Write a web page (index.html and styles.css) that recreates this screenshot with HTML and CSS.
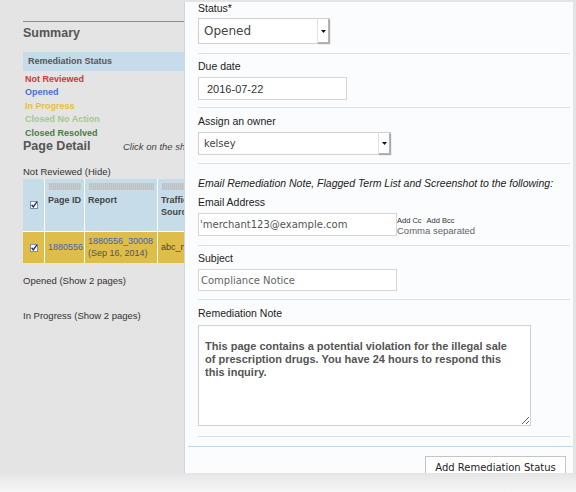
FILE: index.html
```html
<!DOCTYPE html>
<html>
<head>
<meta charset="utf-8">
<title>Remediation</title>
<link rel="stylesheet" href="styles.css">
</head>
<body>
<main class="page">
  <hr class="rule">
  <h2 class="title summary">Summary</h2>
  <div class="status-head">Remediation Status</div>
  <ul class="status-list">
    <li class="st-red">Not Reviewed</li>
    <li class="st-blue">Opened</li>
    <li class="st-yellow">In Progress</li>
    <li class="st-lgreen">Closed No Action</li>
    <li class="st-dgreen">Closed Resolved</li>
  </ul>
  <div class="detail-head">
    <h2 class="title detail-title">Page Detail</h2>
    <span class="hint">Click on the sha</span>
  </div>
  <p class="group g-first">Not Reviewed (Hide)</p>
  <div class="grid">
    <div class="hcell cbcell"><svg class="cb" width="8" height="8" viewBox="0 0 8 8"><rect x="0.5" y="0.5" width="7" height="7" fill="#fff" stroke="#7d8ea6"/><path d="M1.6 3.8 L3.3 5.9 L6.9 0.9" fill="none" stroke="#1d2f7a" stroke-width="1.4"/></svg></div>
    <div class="hcell"><span class="sortbar"></span><span class="hlabel">Page ID</span></div>
    <div class="hcell"><span class="sortbar"></span><span class="hlabel">Report</span></div>
    <div class="hcell"><span class="sortbar"></span><span class="hlabel">Traffic<br>Source</span></div>
    <div class="dcell cbcell"><svg class="cb" width="8" height="8" viewBox="0 0 8 8"><rect x="0.5" y="0.5" width="7" height="7" fill="#fff" stroke="#7d8ea6"/><path d="M1.6 3.8 L3.3 5.9 L6.9 0.9" fill="none" stroke="#1d2f7a" stroke-width="1.4"/></svg></div>
    <div class="dcell"><a class="link">1880556</a></div>
    <div class="dcell"><a class="link">1880556_30008</a><span class="date">(Sep 16, 2014)</span></div>
    <div class="dcell"><span class="src">abc_n</span></div>
  </div>
  <p class="group g-opened">Opened (Show 2 pages)</p>
  <p class="group g-progress">In Progress (Show 2 pages)</p>
</main>

<aside class="drawer">
  <div class="drawer-body">
    <div class="field f-status">
      <label class="label">Status*</label>
      <div class="select sel-status">
        <span class="sel-text big">Opened</span>
        <span class="sel-arrow"><svg width="5" height="3" viewBox="0 0 5 3"><path d="M0 0 H5 L2.5 3 Z" fill="#111"/></svg></span>
      </div>
    </div>
    <div class="field f-due">
      <label class="label">Due date</label>
      <input class="input in-date" type="text" value="2016-07-22">
    </div>
    <div class="field f-owner">
      <label class="label">Assign an owner</label>
      <div class="select sel-owner">
        <span class="sel-text">kelsey</span>
        <span class="sel-arrow"><svg width="5" height="3" viewBox="0 0 5 3"><path d="M0 0 H5 L2.5 3 Z" fill="#111"/></svg></span>
      </div>
    </div>
    <div class="field f-email">
      <p class="intro">Email Remediation Note, Flagged Term List and Screenshot to the following:</p>
      <label class="label l-email">Email Address</label>
      <div class="email-row">
        <input class="input in-email" type="text" value="'merchant123@example.com">
        <div class="email-side">
          <div class="cc"><span>Add Cc</span><span class="bcc">Add Bcc</span></div>
          <div class="comma">Comma separated</div>
        </div>
      </div>
    </div>
    <div class="field f-subject">
      <label class="label">Subject</label>
      <input class="input in-subject" type="text" value="Compliance Notice">
    </div>
    <div class="field f-note">
      <label class="label">Remediation Note</label>
      <textarea class="note">This page contains a potential violation for the illegal sale of prescription drugs. You have 24 hours to respond this this inquiry.</textarea>
    </div>
  </div>
  <div class="drawer-foot">
    <button class="btn" type="button">Add Remediation Status</button>
  </div>
</aside>
</body>
</html>
```
FILE: styles.css
```css
* { box-sizing: border-box; }
html, body { margin: 0; padding: 0; }
body {
  width: 576px;
  height: 492px;
  overflow: hidden;
  position: relative;
  background: linear-gradient(to bottom, #e4e4e4 0, #e4e4e4 473px, #e6e6e6 474px, #f6f6f6 492px);
  font-family: "Liberation Sans", Arial, sans-serif;
  color: #333;
}

/* ---------- left page ---------- */
.page { padding: 21px 0 0 23px; width: 185px; overflow: hidden; }
.rule { margin: 0; border: 0; border-top: 1px solid #8e8e8e; height: 0; }
.title { margin: 0; font-size: 12.5px; line-height: 15px; font-weight: bold; color: #555; }
.summary { margin-top: 3.5px; }
.status-head {
  margin-top: 11.5px;
  height: 19px;
  line-height: 19px;
  background: #c7dcea;
  color: #555;
  font-size: 9px;
  font-weight: bold;
  padding-left: 5px;
}
.status-list { margin: 1.5px 0 0; padding: 0 0 0 2px; list-style: none; }
.status-list li { font-size: 9px; line-height: 13.6px; font-weight: bold; }
.st-red { color: #c8393b; }
.st-blue { color: #4c6fd7; }
.st-yellow { color: #e6c03c; }
.st-lgreen { color: #a7c78b; }
.st-dgreen { color: #45803d; }

.detail-head { display: flex; align-items: baseline; }
.detail-title { width: 100px; line-height: 13px; flex: none; }
.hint { font-size: 9.5px; font-style: italic; color: #444; white-space: nowrap; }

.group { margin: 0; font-size: 9.5px; line-height: 12px; color: #333; white-space: nowrap; }
.g-first { margin-top: 13px; }
.g-opened { margin-top: 11.5px; }
.g-progress { margin-top: 23px; }

.grid {
  margin-top: 0.5px;
  display: grid;
  grid-template-columns: 21px 39px 72px 40px;
  grid-template-rows: 52.5px 31px;
  column-gap: 1px;
  row-gap: 1px;
  background: #fff;
  width: 175px;
}
.hcell { background: #c6dce9; display: flex; flex-direction: column; }
.dcell { background: #dfbd4b; display: flex; flex-direction: column; justify-content: center; padding-left: 3px; white-space: nowrap; }
.cbcell { align-items: center; justify-content: center; padding: 0 0 0 1px; }
.cb { display: block; }
.sortbar {
  display: block;
  height: 7px;
  margin: 4px 3px 0 4px;
  background: repeating-linear-gradient(90deg, #bcc0c3 0 1px, #c9cccf 1px 2px);
}
.hlabel { display: block; margin-top: 4.5px; padding-left: 3px; font-size: 9px; line-height: 12px; font-weight: bold; color: #444; white-space: nowrap; }
.link { color: #3d64b0; font-size: 9px; line-height: 11.7px; text-decoration: none; }
.date { font-size: 9px; line-height: 11.7px; color: #555; }
.src { font-size: 9px; line-height: 11.7px; color: #444; }

/* ---------- drawer ---------- */
.drawer {
  position: absolute;
  left: 184px;
  top: 2px;
  width: 389px;
  height: 471px;
  overflow: hidden;
  background: #fbfcfd;
  border-left: 1px solid #c7d7e6;
}
.drawer-body { margin: 0 3px 0 13px; }
.field { border-bottom: 1px solid #d8e0e9; }
.label { display: block; font-size: 10.5px; line-height: 12px; color: #222; }

.f-status { padding: 0 0 9px; }
.f-status .label { margin-bottom: 4px; }
.f-due { padding: 6px 0 7px; }
.f-due .label { margin-bottom: 5px; }
.f-owner { padding: 7px 0 8px; }
.f-owner .label { margin-bottom: 5px; }
.f-email { padding: 13px 0 9px; }
.f-email .label { margin-bottom: 5px; }
.f-subject { padding: 6px 0 8px; }
.f-subject .label { margin-bottom: 5px; }
.f-note { padding: 7px 0 10px; }
.f-note .label { margin-bottom: 6px; }

.intro { margin: 0; font-size: 10.5px; line-height: 12px; font-style: italic; color: #222; white-space: nowrap; }
.l-email { margin-top: 7px; }

.select {
  display: flex;
  align-items: stretch;
  background: #fff;
  border: 1px solid #d0d0d0;
}
.sel-status { width: 132px; height: 26px; }
.sel-owner { width: 193px; height: 23px; }
.sel-text { flex: 1; display: flex; align-items: center; padding-left: 5px; font-family: "DejaVu Sans", sans-serif; font-size: 10px; color: #444; }
.sel-text.big { font-size: 12px; }
.sel-arrow {
  width: 12px;
  flex: none;
  display: flex;
  align-items: center;
  justify-content: center;
  border-left: 1px solid #e2e2e2;
  box-shadow: inset -1px -1px 0 #b5b5b5, 1px 1px 1px #aaa;
}
.sel-arrow svg { display: block; }

.input {
  display: block;
  margin: 0;
  height: 23px;
  background: #fff;
  border: 1px solid #d6d6d6;
  outline: none;
  font-family: "DejaVu Sans", sans-serif;
  font-size: 10px;
  color: #555;
}
.in-date { width: 149px; padding: 0 0 0 8px; font-family: "Liberation Sans", Arial, sans-serif; font-size: 11px; color: #333; }
.in-email { width: 199px; padding: 0 0 0 1px; color: #555; flex: none; }
.in-subject { width: 199px; height: 22px; padding: 0 0 0 2px; color: #666; }

.email-row { display: flex; align-items: flex-start; }
.email-side { padding-top: 3px; }
.cc { font-size: 7.5px; line-height: 9px; color: #333; white-space: nowrap; }
.bcc { margin-left: 5px; }
.comma { font-size: 9.5px; line-height: 11px; color: #666; white-space: nowrap; }

.note {
  display: block;
  margin: 0;
  width: 333px;
  height: 101px;
  padding: 14px 19px 0 6px;
  background: #fff;
  border: 1px solid #d0d0d0;
  outline: none;
  font-family: "Liberation Sans", Arial, sans-serif;
  font-size: 11px;
  line-height: 13px;
  font-weight: bold;
  color: #555;
}

.drawer-foot {
  margin: 9px 0 0 3px;
  border-top: 1px solid #c3d5e5;
  padding: 9px 7px 0 0;
  display: flex;
  justify-content: flex-end;
}
.btn {
  margin: 0;
  width: 141px;
  height: 22px;
  padding: 0;
  background: #fff;
  border: 1px solid #c4c4c4;
  border-radius: 0;
  font-family: "DejaVu Sans", sans-serif;
  font-size: 10px;
  color: #222;
  text-align: center;
}
```
